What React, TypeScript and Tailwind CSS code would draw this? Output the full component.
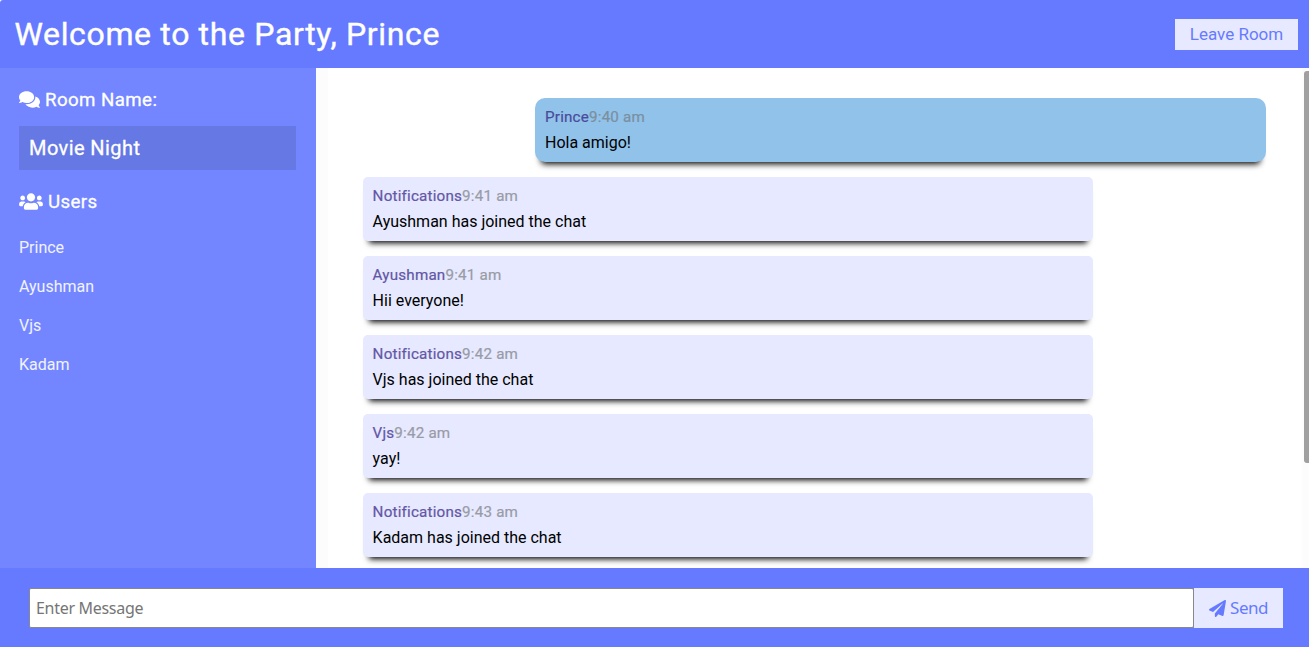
import React from "react";
import { FaComments, FaPaperPlane, FaUsers } from "react-icons/fa";

type Message = { author: string; time: string; text: string; own?: boolean };

const messages: Message[] = [
  { author: "Prince", time: "9:40 am", text: "Hola amigo!", own: true },
  { author: "Notifications", time: "9:41 am", text: "Ayushman has joined the chat" },
  { author: "Ayushman", time: "9:41 am", text: "Hii everyone!" },
  { author: "Notifications", time: "9:42 am", text: "Vjs has joined the chat" },
  { author: "Vjs", time: "9:42 am", text: "yay!" },
  { author: "Notifications", time: "9:43 am", text: "Kadam has joined the chat" },
];

const users = ["Prince", "Ayushman", "Vjs", "Kadam"];

function Bubble({ author, time, text, own }: Message) {
  return (
    <div
      className={
        own
          ? "mr-[36px] h-16 w-[731px] shrink-0 self-end rounded-[10px] bg-[#91c2ea] px-[10px] pt-[6px] shadow-[0_8px_6px_-6px_#000]"
          : "ml-[35px] h-16 w-[730px] shrink-0 rounded-[5px] bg-[#e6e9ff] px-[9.6px] pt-[6px] shadow-[0_8px_6px_-6px_#000]"
      }
    >
      <p className="text-[15.2px] leading-[26px] tracking-[0.2px] [-webkit-text-stroke:0.2px_currentColor]">
        <span className={own ? "text-[#4b4b9b]" : "text-[#6356a5]"}>{author}</span>
        <span className={own ? "text-[#7b8fa0]" : "text-[#999ba5]"}>{time}</span>
      </p>
      <p className="text-base leading-[25px] text-black">{text}</p>
    </div>
  );
}

export default function App() {
  return (
    <div className="flex h-[647px] w-full flex-col overflow-hidden bg-white font-['Roboto',sans-serif]">
      <header className="flex h-[68px] shrink-0 items-center justify-between rounded-tl-[3px] bg-[#667aff] pr-[11px] pl-[14.5px]">
        <h1 className="text-[32px] leading-[38px] tracking-[0.65px] text-white [-webkit-text-stroke:0.4px_currentColor]">
          Welcome to the Party, Prince
        </h1>
        <button className="h-[31px] w-[123px] bg-[#e6e9ff] pt-px text-[17px] text-[#667aff]">Leave Room</button>
      </header>
      <main className="flex h-[500px] shrink-0">
        <aside className="w-[316px] shrink-0 bg-[#7386ff] pt-[21px] pr-5 pl-[19px] text-white">
          <h3 className="flex h-[23px] items-center gap-[5px] text-[18.7px] tracking-[0.42px] [-webkit-text-stroke:0.3px_currentColor]">
            <FaComments className="-mt-0.5 h-[19px] w-[21px]" />
            Room Name:
          </h3>
          <h2 className="mt-[14px] flex h-11 items-center bg-[#6678e3] px-[10px] text-[20px] tracking-[0.42px] [-webkit-text-stroke:0.3px_currentColor]">
            Movie Night
          </h2>
          <h3 className="mt-[21px] flex h-[23px] items-center gap-[5px] text-[18.7px] tracking-[0.38px] [-webkit-text-stroke:0.3px_currentColor]">
            <FaUsers className="-mt-0.5 h-[19px] w-[24px]" />
            Users
          </h3>
          <ul className="mt-[22px] flex flex-col gap-[15px] text-base">
            {users.map((user) => (
              <li key={user} className="h-6 text-white/90">{user}</li>
            ))}
          </ul>
        </aside>
        <section className="flex min-w-0 flex-1 bg-[#fcfcfc] pl-3">
          <div className="flex min-w-0 flex-1 flex-col gap-[15px] overflow-hidden bg-white pt-[30px]">
            {messages.map((message, i) => (
              <Bubble key={i} {...message} />
            ))}
          </div>
          <div className="flex w-[7px] justify-end pt-[3px]">
            <div className="h-[392px] w-[5px] rounded-l-[3px] bg-[#a0a0a0]" />
          </div>
        </section>
      </main>
      <footer className="flex h-[79px] shrink-0 items-start bg-[#667aff] pt-5 pr-[26px] pl-[29px] font-['Noto_Sans',sans-serif] text-base">
        <input
          className="h-10 min-w-0 flex-1 rounded-[2px] border border-[#888] bg-white px-[6px] tracking-[-0.3px] placeholder:text-[#757575]"
          placeholder="Enter Message"
        />
        <button className="flex h-10 w-[89px] items-center justify-center gap-1 bg-[#e6e9ff] text-[17px] tracking-[-0.5px] text-[#667aff]">
          <FaPaperPlane />
          Send
        </button>
      </footer>
    </div>
  );
}
